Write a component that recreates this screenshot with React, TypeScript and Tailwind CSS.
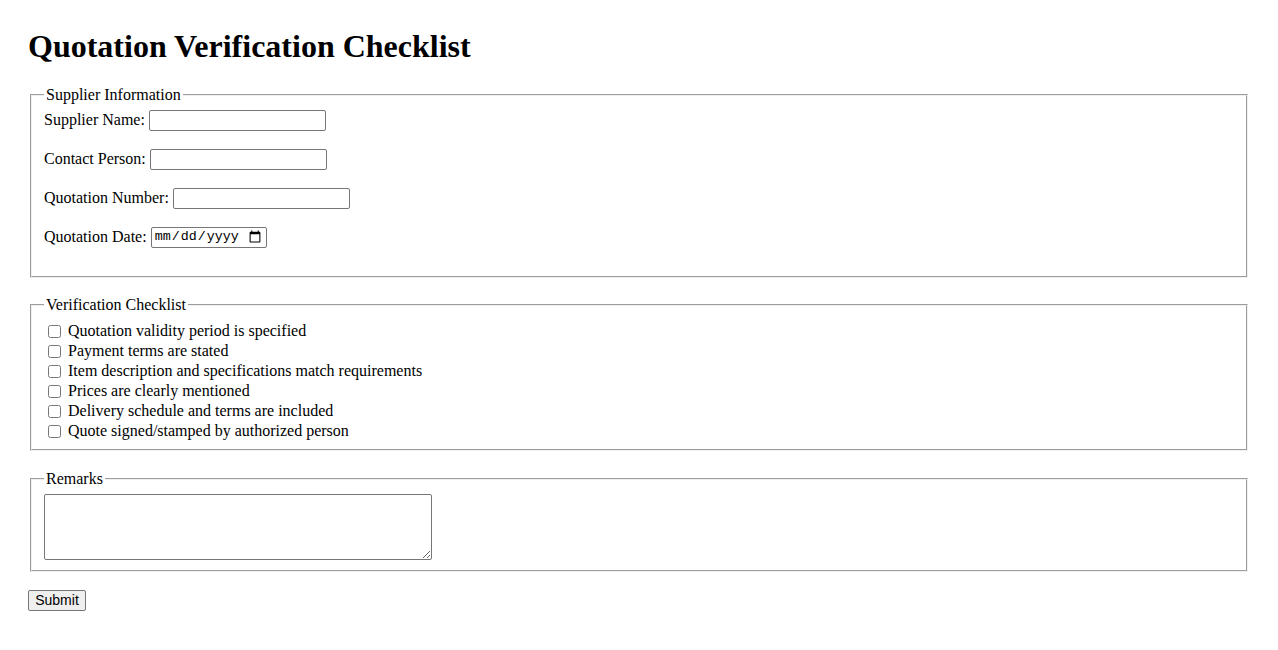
import { useState } from "react";

const supplierFields = [
  { id: "supplierName", label: "Supplier Name:", type: "text" },
  { id: "contactPerson", label: "Contact Person:", type: "text" },
  { id: "quotationNumber", label: "Quotation Number:", type: "text" },
  { id: "quotationDate", label: "Quotation Date:", type: "date" },
];

const checklist = [
  "Quotation validity period is specified",
  "Payment terms are stated",
  "Item description and specifications match requirements",
  "Prices are clearly mentioned",
  "Delivery schedule and terms are included",
  "Quote signed/stamped by authorized person",
];

const fieldsetClass = "mx-[2px] border-2 border-[#f0f0f0] [border-style:groove] px-[12px]";

export default function App() {
  const [checked, setChecked] = useState<boolean[]>(checklist.map(() => false));

  return (
    <div className="min-h-screen bg-white px-[28px] pt-[28px] font-['Liberation_Serif',serif] text-[16px] text-black">
      <h1 className="text-[32px] font-bold leading-[37px]">Quotation Verification Checklist</h1>

      <form className="mt-[21px]" onSubmit={(e) => e.preventDefault()}>
        <fieldset className={`${fieldsetClass} pt-[4.6px] pb-[11px]`}>
          <legend className="px-[2px] leading-[18px]">Supplier Information</legend>
          {supplierFields.map((f) => (
            <div key={f.id} className="mb-[16px] flex h-[23px] items-center gap-[4px]">
              <label htmlFor={f.id}>{f.label}</label>
              {f.type === "date" ? (
                <input
                  id={f.id}
                  type="date"
                  className="h-[21px] w-[116px] rounded-[2px] border border-[#767676] px-[2px] font-['Liberation_Mono',monospace] text-[13.33px]"
                />
              ) : (
                <input
                  id={f.id}
                  type="text"
                  className="h-[21px] w-[177px] rounded-[2px] border border-[#767676] px-[2px] font-['Liberation_Sans',sans-serif] text-[13.33px]"
                />
              )}
            </div>
          ))}
        </fieldset>

        <fieldset className={`mt-[18px] pt-[5.6px] pb-[8px] ${fieldsetClass}`}>
          <legend className="px-[2px] leading-[18px]">Verification Checklist</legend>
          <div className="mt-[2px]">
            {checklist.map((item, i) => (
              <label key={item} className="flex h-[20px] items-center">
                <input
                  type="checkbox"
                  checked={checked[i]}
                  onChange={() => setChecked((c) => c.map((v, j) => (j === i ? !v : v)))}
                  className="ml-[4px] mr-[7px] h-[13px] w-[13px]"
                />
                <span>{item}</span>
              </label>
            ))}
          </div>
        </fieldset>

        <fieldset className={`mt-[19px] pt-[5.6px] pb-[10px] ${fieldsetClass}`}>
          <legend className="px-[2px] leading-[18px]">Remarks</legend>
          <textarea className="block h-[66px] w-[388px] rounded-[2px] border border-[#767676] font-['Liberation_Mono',monospace] text-[13.33px]" />
        </fieldset>

        <button
          type="submit"
          className="mt-[18px] h-[21px] w-[58px] rounded-[2px] border border-[#767676] bg-[#efefef] font-['Liberation_Sans',sans-serif] text-[14px] leading-none text-black"
        >
          Submit
        </button>
      </form>
    </div>
  );
}
